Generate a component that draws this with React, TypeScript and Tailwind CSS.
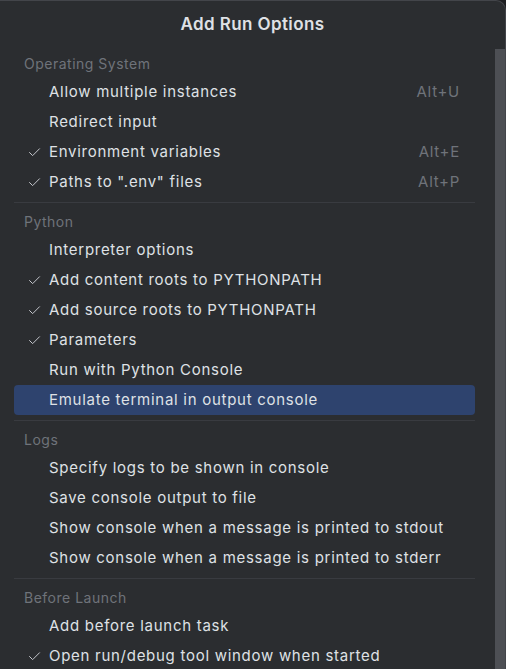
import { Check } from 'lucide-react';

type Item = { label: string; checked?: boolean; shortcut?: string; active?: boolean };
type Section = { title: string; items: Item[] };

const SECTIONS: Section[] = [
  {
    title: 'Operating System',
    items: [
      { label: 'Allow multiple instances', shortcut: 'Alt+U' },
      { label: 'Redirect input' },
      { label: 'Environment variables', checked: true, shortcut: 'Alt+E' },
      { label: 'Paths to ".env" files', checked: true, shortcut: 'Alt+P' },
    ],
  },
  {
    title: 'Python',
    items: [
      { label: 'Interpreter options' },
      { label: 'Add content roots to PYTHONPATH', checked: true },
      { label: 'Add source roots to PYTHONPATH', checked: true },
      { label: 'Parameters', checked: true },
      { label: 'Run with Python Console' },
      { label: 'Emulate terminal in output console', active: true },
    ],
  },
  {
    title: 'Logs',
    items: [
      { label: 'Specify logs to be shown in console' },
      { label: 'Save console output to file' },
      { label: 'Show console when a message is printed to stdout' },
      { label: 'Show console when a message is printed to stderr' },
    ],
  },
  {
    title: 'Before Launch',
    items: [
      { label: 'Add before launch task' },
      { label: 'Open run/debug tool window when started', checked: true },
    ],
  },
];

export default function App() {
  return (
    <div
      className="h-[669px] w-[506px] overflow-hidden bg-[#1e1f22] text-[15px] tracking-[0.72px] text-[#dfe1e5]"
      style={{ fontFamily: 'Inter, "Noto Sans", sans-serif' }}
    >
      <div className="flex h-full flex-col rounded-tr-[10px] border-t border-r border-[#43454a] bg-[#2b2d30]">
        {/* Заголовок */}
        <div className="flex h-[48px] shrink-0 items-center justify-center font-semibold text-[17px] tracking-[0.4px] text-[#dfe1e5]">
          Add Run Options
        </div>

        <div className="flex min-h-0 flex-1">
          {/* Список опций */}
          <div className="w-[489px] px-[14px]">
            {SECTIONS.map((section, i) => (
              <div key={section.title}>
                {i > 0 && (
                  <div className="flex h-[10px] items-center">
                    <div className="h-px w-full bg-[#393b40]" />
                  </div>
                )}
                <div className="flex h-[28px] items-center pl-[10px] text-[14px] tracking-[0.5px] text-[#6f737a]">
                  {section.title}
                </div>
                {section.items.map((item) => (
                  <Row key={item.label} item={item} />
                ))}
              </div>
            ))}
          </div>

          {/* Скроллбар */}
          <div className="ml-auto w-[10px] bg-[#4d4f54]" />
        </div>
      </div>
    </div>
  );
}

function Row({ item }: { item: Item }) {
  return (
    <div
      className={
        item.active
          ? 'flex h-[30px] items-center rounded-[4px] bg-[#2e436e] pr-[15px]'
          : 'flex h-[30px] items-center pr-[15px]'
      }
    >
      <span className="flex w-[35px] shrink-0 items-center pl-[13px] text-[#c4c6cc]">
        {item.checked && <Check size={15} strokeWidth={1.6} />}
      </span>
      <span className="flex-1 whitespace-nowrap">{item.label}</span>
      {item.shortcut && <span className="text-[#6f737a]">{item.shortcut}</span>}
    </div>
  );
}
